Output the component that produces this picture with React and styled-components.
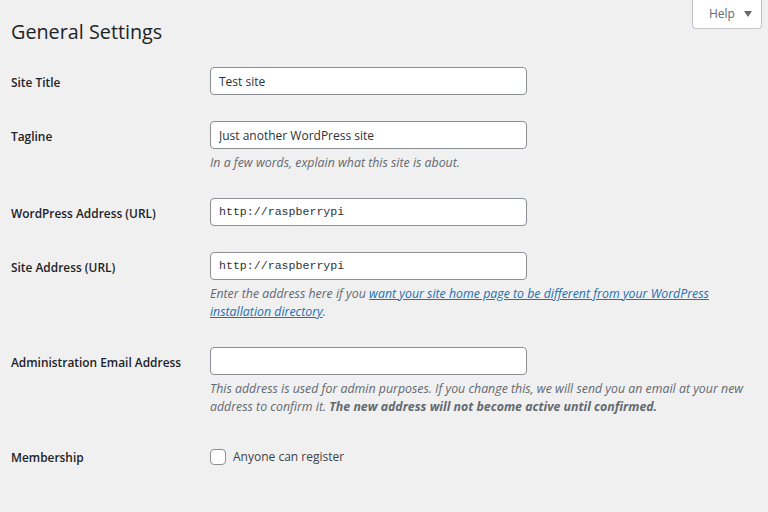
import React from "react";
import styled, { createGlobalStyle } from "styled-components";

const Global = createGlobalStyle`
  html, body { margin: 0; padding: 0; background: #f0f0f1; }
  body { font-family: "Open Sans", "Noto Sans", sans-serif; color: #3c434a; }
`;

const Page = styled.div`
  padding: 0 12px 0 10px;
  width: 768px;
  box-sizing: border-box;
`;

const Header = styled.div`
  display: flex;
  justify-content: space-between;
  align-items: flex-start;
`;

const Title = styled.h1`
  margin: 0;
  padding-top: 18px;
  padding-left: 1px;
  font-size: 19.8px;
  line-height: 27px;
  font-weight: 400;
  color: #1d2327;
`;

const HelpTab = styled.button`
  display: flex;
  align-items: center;
  gap: 9px;
  margin-right: -6px;
  margin-top: -1px;
  height: 30px;
  padding: 0 13px 0 16px;
  width: 70px;
  box-sizing: border-box;
  background: #fff;
  border: 1px solid #c3c4c7;
  border-top: none;
  border-radius: 0 0 4px 4px;
  font-family: inherit;
  font-size: 12px;
  color: #646970;
`;

const Arrow = styled.span`
  width: 0;
  height: 0;
  border-left: 4px solid transparent;
  border-right: 4px solid transparent;
  border-top: 6px solid #646970;
`;

const Form = styled.div`
  margin-top: 9px;
`;

const Row = styled.div`
  display: grid;
  grid-template-columns: 200px 1fr;
  padding: 13px 0;
`;

const Label = styled.div`
  padding: 2px 0 0 1px;
  font-size: 11.9px;
  font-weight: 600;
  line-height: 26px;
  color: #1d2327;
`;

const Field = styled.div`
  display: flex;
  flex-direction: column;
  align-items: flex-start;
  max-width: 540px;
`;

const Input = styled.input`
  width: 317px;
  height: 28px;
  box-sizing: border-box;
  border: 1px solid #8c8f94;
  border-radius: 4px;
  background: #fff;
  padding: 0 8px;
  font-family: ${(p) => (p.$mono ? '"Liberation Mono", monospace' : "inherit")};
  font-size: ${(p) => (p.$mono ? "11.6px" : "12px")};
  color: #2c3338;
  margin: 0;
  outline: none;
`;

const Desc = styled.p`
  margin: 5px 0 -1px;
  font-size: 12.35px;
  line-height: 18.5px;
  font-style: italic;
  color: #646970;
`;

const Link = styled.a`
  color: #2271b1;
  text-decoration: underline;
`;

const CheckLabel = styled.label`
  display: flex;
  align-items: center;
  gap: 7px;
  height: 28px;
  padding-top: 1px;
  font-size: 12px;
  color: #3c434a;
`;

const Check = styled.span`
  width: 16px;
  height: 16px;
  box-sizing: border-box;
  border: 1px solid #8c8f94;
  border-radius: 4px;
  background: #fff;
`;

export default function App() {
  return (
    <Page>
      <Global />
      <Header>
        <Title>General Settings</Title>
        <HelpTab>
          Help <Arrow />
        </HelpTab>
      </Header>
      <Form>
        <Row>
          <Label>Site Title</Label>
          <Field>
            <Input defaultValue="Test site" />
          </Field>
        </Row>
        <Row>
          <Label>Tagline</Label>
          <Field>
            <Input defaultValue="Just another WordPress site" />
            <Desc>In a few words, explain what this site is about.</Desc>
          </Field>
        </Row>
        <Row>
          <Label>WordPress Address (URL)</Label>
          <Field>
            <Input $mono defaultValue="http://raspberrypi" />
          </Field>
        </Row>
        <Row>
          <Label>Site Address (URL)</Label>
          <Field>
            <Input $mono defaultValue="http://raspberrypi" />
            <Desc>
              Enter the address here if you{" "}
              <Link href="#">
                want your site home page to be different from your WordPress
                installation directory
              </Link>
              .
            </Desc>
          </Field>
        </Row>
        <Row>
          <Label>Administration Email Address</Label>
          <Field>
            <Input defaultValue="" />
            <Desc>
              This address is used for admin purposes. If you change this, we
              will send you an email at your new address to confirm it.{" "}
              <strong>The new address will not become active until confirmed.</strong>
            </Desc>
          </Field>
        </Row>
        <Row>
          <Label>Membership</Label>
          <Field>
            <CheckLabel>
              <Check />
              Anyone can register
            </CheckLabel>
          </Field>
        </Row>
      </Form>
    </Page>
  );
}
